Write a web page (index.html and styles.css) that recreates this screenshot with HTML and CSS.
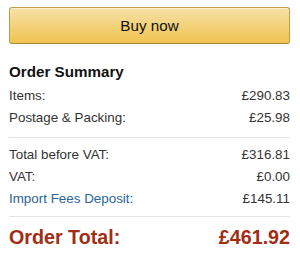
FILE: index.html
```html
<!DOCTYPE html>
<html>
<head>
<meta charset="utf-8">
<link rel="stylesheet" href="styles.css">
</head>
<body>
<div class="page">
  <button class="buy-btn">Buy now</button>
  <h2 class="summary-title">Order Summary</h2>
  <div class="rows">
    <div class="row"><span>Items:</span><span>£290.83</span></div>
    <div class="row"><span>Postage &amp; Packing:</span><span>£25.98</span></div>
  </div>
  <hr class="divider divider-a">
  <div class="rows">
    <div class="row"><span>Total before VAT:</span><span>£316.81</span></div>
    <div class="row"><span>VAT:</span><span>£0.00</span></div>
    <div class="row"><a class="link" href="#">Import Fees Deposit:</a><span>£145.11</span></div>
  </div>
  <hr class="divider divider-b">
  <div class="total"><span>Order Total:</span><span>£461.92</span></div>
</div>
</body>
</html>
```

FILE: styles.css
```css
html, body {
  margin: 0;
  padding: 0;
  background: #fff;
}
body {
  font-family: "Liberation Sans", Arial, sans-serif;
  color: #333;
}
.page {
  width: 281px;
  padding: 7px 10px 0 9px;
}
.buy-btn {
  display: flex;
  align-items: center;
  justify-content: center;
  width: 281px;
  height: 37px;
  margin: 0;
  padding: 0 0 1px;
  border: 1px solid #bf9d45;
  border-bottom-color: #a88734;
  border-radius: 3px;
  background: linear-gradient(to bottom, #f8e1a8, #f0c350);
  box-shadow: inset 0 1px 0 rgba(255,255,255,0.45);
  font-family: "Liberation Sans", Arial, sans-serif;
  font-size: 15.2px;
  color: #111;
}
.summary-title {
  margin: 18px 0 0;
  font-size: 15.2px;
  line-height: 20px;
  font-weight: bold;
  color: #111;
}
.rows {
  display: flex;
  flex-direction: column;
}
.summary-title + .rows {
  margin-top: 3px;
}
.row {
  display: flex;
  justify-content: space-between;
  font-size: 13.4px;
  line-height: 22px;
  height: 22px;
}
.link {
  color: #2a649c;
  text-decoration: none;
}
.divider {
  border: 0;
  height: 1px;
  background: #e4e4e4;
  margin: 0;
}
.divider-a {
  margin-top: 8px;
  margin-bottom: 6px;
}
.divider-b {
  margin-top: 6px;
  margin-bottom: 8px;
}
.total {
  display: flex;
  justify-content: space-between;
  font-size: 19.7px;
  line-height: 24px;
  font-weight: bold;
  color: #a22d15;
}
```
